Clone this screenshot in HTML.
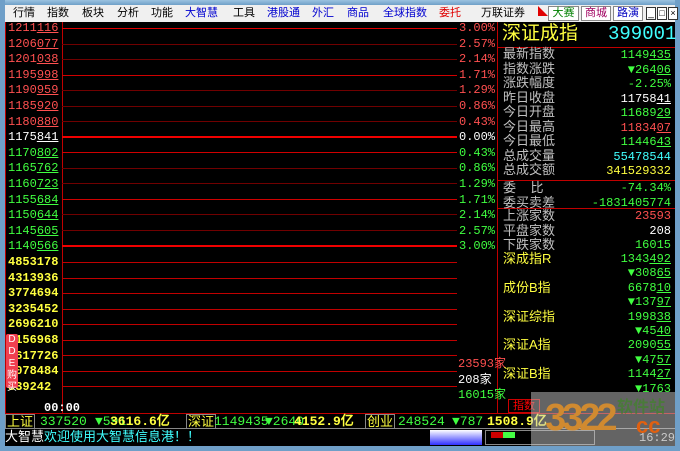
<!DOCTYPE html>
<html><head><meta charset="utf-8"><style>
*{margin:0;padding:0;box-sizing:border-box}
body{width:680px;height:451px;overflow:hidden;background:#6f9fc8;font-family:"Liberation Mono","Noto Sans CJK SC",monospace;position:relative}
.a{position:absolute;white-space:nowrap}
.m{font-family:"Liberation Mono",monospace;font-size:12px;line-height:14px}
.c{font-family:"Liberation Sans","Noto Sans CJK SC",sans-serif}
.r{color:#ff5050}.g{color:#40ff40}.w{color:#fff}.y{color:#ffff40}.cy{color:#40ffff}
.hl{position:absolute;height:1px;background:#c00000}
.u{text-decoration:underline}
.bx{border:1px solid #888;height:15px;top:0}
</style></head><body>
<div class="a" style="left:0;top:0;width:680px;height:5px;background:linear-gradient(#9cc2e0,#6f9fc8)"></div>
<div class="a" style="left:0;top:0;width:5px;height:451px;background:#6f9fc8"></div>
<div class="a" style="left:675px;top:0;width:5px;height:451px;background:#6f9fc8"></div>
<div class="a c" style="left:5px;top:5px;width:670px;height:17px;background:#f0f0f0;font-size:11px;line-height:17px;color:#000">
<span class="a" style="left:8px">行情</span><span class="a" style="left:42px">指数</span><span class="a" style="left:77px">板块</span><span class="a" style="left:112px">分析</span><span class="a" style="left:146px">功能</span><span class="a" style="left:180px;color:#0000d0">大智慧</span><span class="a" style="left:228px">工具</span><span class="a" style="left:262px;color:#0000d0">港股通</span><span class="a" style="left:307px;color:#0000d0">外汇</span><span class="a" style="left:342px;color:#0000d0">商品</span><span class="a" style="left:378px;color:#0000d0">全球指数</span><span class="a" style="left:434px;color:#e00000">委托</span><span class="a" style="left:476px">万联证券</span>
<span class="a" style="left:533px;top:2px;color:#e00000;font-size:10px;line-height:12px">◣</span>
<span class="a" style="left:543px;top:1px;height:15px;width:31px;border:1px solid #888;background:#fff;color:#008000;line-height:13px;text-align:center">大赛</span>
<span class="a" style="left:576px;top:1px;height:15px;width:30px;border:1px solid #888;background:#fff;color:#a00060;line-height:13px;text-align:center">商城</span>
<span class="a" style="left:608px;top:1px;height:15px;width:30px;border:1px solid #888;background:#fff;color:#0000c0;line-height:13px;text-align:center">路演</span>
<span class="a" style="left:641px;top:2px;height:13px;width:10px;border:1px solid #333;background:#fff;font-size:10px;line-height:11px;text-align:center">_</span>
<span class="a" style="left:652px;top:2px;height:13px;width:10px;border:1px solid #333;background:#fff;font-size:9px;line-height:11px;text-align:center">□</span>
<span class="a" style="left:663px;top:2px;height:13px;width:10px;border:1px solid #333;background:#fff;font-size:9px;line-height:11px;text-align:center">×</span>
</div>
<div class="a" style="left:5px;top:22px;width:670px;height:424px;background:#000"></div>
<div class="a" style="left:5px;top:22px;width:1px;height:392px;background:#c00000"></div>
<div class="a" style="left:62px;top:22px;width:1px;height:392px;background:#c00000"></div>
<div class="a" style="left:497px;top:22px;width:1px;height:392px;background:#c00000"></div>
<div class="a" style="left:5px;top:413px;width:670px;height:1px;background:#c00000"></div>

<div class="hl" style="left:62px;top:28px;width:395px;background:#e00000"></div>
<div class="hl" style="left:62px;top:44px;width:395px;background:#700000"></div>
<div class="hl" style="left:62px;top:59px;width:395px;background:#700000"></div>
<div class="hl" style="left:62px;top:75px;width:395px;background:#d00000"></div>
<div class="hl" style="left:62px;top:90px;width:395px;background:#700000"></div>
<div class="hl" style="left:62px;top:106px;width:395px;background:#700000"></div>
<div class="hl" style="left:62px;top:121px;width:395px;background:#700000"></div>
<div class="hl" style="left:62px;top:136px;width:395px;height:2px;background:#f00000"></div>
<div class="hl" style="left:62px;top:152px;width:395px;background:#d00000"></div>
<div class="hl" style="left:62px;top:168px;width:395px;background:#700000"></div>
<div class="hl" style="left:62px;top:183px;width:395px;background:#700000"></div>
<div class="hl" style="left:62px;top:199px;width:395px;background:#d00000"></div>
<div class="hl" style="left:62px;top:214px;width:395px;background:#700000"></div>
<div class="hl" style="left:62px;top:230px;width:395px;background:#700000"></div>
<div class="hl" style="left:62px;top:245px;width:395px;height:2px;background:#f00000"></div>
<div class="hl" style="left:62px;top:262px;width:395px"></div>
<div class="hl" style="left:62px;top:278px;width:395px"></div>
<div class="hl" style="left:62px;top:293px;width:395px"></div>
<div class="hl" style="left:62px;top:309px;width:395px"></div>
<div class="hl" style="left:62px;top:324px;width:395px"></div>
<div class="hl" style="left:62px;top:340px;width:395px"></div>
<div class="hl" style="left:62px;top:355px;width:395px"></div>
<div class="hl" style="left:62px;top:371px;width:395px"></div>
<div class="hl" style="left:62px;top:386px;width:395px"></div>

<div class="a m r" style="left:8px;top:21px;line-height:15.6px">1211<span class="u">116</span><br>1206<span class="u">077</span><br>1201<span class="u">038</span><br>1195<span class="u">998</span><br>1190<span class="u">959</span><br>1185<span class="u">920</span><br>1180<span class="u">880</span><br><span class="w">1175<span class="u">841</span></span><br><span class="g">1170<span class="u">802</span><br>1165<span class="u">762</span><br>1160<span class="u">723</span><br>1155<span class="u">684</span><br>1150<span class="u">644</span><br>1145<span class="u">605</span><br>1140<span class="u">566</span></span></div>
<div class="a m y" style="left:8px;top:255px;line-height:15.6px;font-weight:bold">4853178<br>4313936<br>3774694<br>3235452<br>2696210<br>2156968<br>1617726<br>1078484<br>539242</div>
<div class="a c" style="left:6px;top:334px;width:12px;height:54px;background:#f04050;border-radius:2px;color:#fff;font-size:10px;line-height:12px;text-align:center">D<br>D<br>E<br>购<br>买</div>
<div class="a m w" style="left:44px;top:401px;font-weight:bold">00:00</div>

<div class="a m r" style="left:459px;top:21px;line-height:15.6px">3.00%<br>2.57%<br>2.14%<br>1.71%<br>1.29%<br>0.86%<br>0.43%<br><span class="w">0.00%</span><br><span class="g">0.43%<br>0.86%<br>1.29%<br>1.71%<br>2.14%<br>2.57%<br>3.00%</span></div>
<div class="a m r" style="left:458px;top:357px">23593家</div>
<div class="a m w" style="left:458px;top:373px">208家</div>
<div class="a m g" style="left:458px;top:388px">16015家</div>

<div class="a c y" style="left:502px;top:22px;font-size:19px;line-height:24px">深证成指</div>
<div class="a m cy" style="left:608px;top:23px;font-size:19px;line-height:22px">399001</div>
<div class="hl" style="left:497px;top:47px;width:178px"></div>
<div class="hl" style="left:497px;top:180px;width:178px"></div>
<div class="hl" style="left:497px;top:208px;width:178px"></div>
<div class="a c" style="left:503px;top:47px;font-size:13px;line-height:14.5px;color:#c0c0c0">最新指数<br>指数涨跌<br>涨跌幅度<br>昨日收盘<br>今日开盘<br>今日最高<br>今日最低<br>总成交量<br>总成交额</div>
<div class="a m" style="right:9px;top:48px;line-height:14.5px;text-align:right"><span class="g">1149<span class="u">435</span></span><br><span class="g">▼264<span class="u">06</span></span><br><span class="g">-2.25%</span><br><span class="w">11758<span class="u">41</span></span><br><span class="g">11689<span class="u">29</span></span><br><span class="r">11834<span class="u">07</span></span><br><span class="g">11446<span class="u">43</span></span><br><span class="cy">55478544</span><br><span class="y">341529332</span></div>
<div class="a c" style="left:503px;top:181px;font-size:13px;line-height:14.5px;color:#c0c0c0">委&nbsp;&nbsp;&nbsp;&nbsp;比<br>委买卖差</div>
<div class="a m g" style="right:9px;top:181px;line-height:14.5px;text-align:right">-74.34%<br>-1831405774</div>
<div class="a c" style="left:503px;top:209px;font-size:13px;line-height:14.5px;color:#c0c0c0">上涨家数<br>平盘家数<br>下跌家数</div>
<div class="a m" style="right:9px;top:209px;line-height:14.5px;text-align:right"><span class="r">23593</span><br><span class="w">208</span><br><span class="g">16015</span></div>
<div class="a c y" style="left:503px;top:252px;font-size:13px;line-height:14.4px">深成指R<br><br>成份B指<br><br>深证综指<br><br>深证A指<br><br>深证B指</div>
<div class="a m g" style="right:9px;top:252px;line-height:14.4px;text-align:right">1343<span class="u">492</span><br>▼308<span class="u">65</span><br>6678<span class="u">10</span><br>▼137<span class="u">97</span><br>1998<span class="u">38</span><br>▼45<span class="u">40</span><br>2090<span class="u">55</span><br>▼47<span class="u">57</span><br>1144<span class="u">27</span><br>▼1763</div>
<div class="a c" style="left:508px;top:399px;width:32px;height:14px;border:1px solid #c00;color:#f00;font-size:11px;line-height:12px;text-align:center">指数</div>

<div class="a m" style="left:5px;top:414px;width:670px;height:15px;line-height:15px;font-size:13px">
<span class="a bx" style="left:0;width:30px"></span><span class="a bx" style="left:181px;width:30px"></span><span class="a bx" style="left:360px;width:30px"></span>
<span class="a c y" style="left:2px;font-size:13px">上证</span>
<span class="a g" style="left:35px">337520</span><span class="a g" style="left:90px">▼591</span><span class="a y" style="left:105px;font-weight:bold">3616.6亿</span>
<span class="a c y" style="left:183px;font-size:13px">深证</span><span class="a g" style="left:209px">1149435</span><span class="a g" style="left:260px">▼2640</span><span class="a y" style="left:289px;font-weight:bold">4152.9亿</span>
<span class="a c y" style="left:362px;font-size:13px">创业</span><span class="a g" style="left:393px">248524</span><span class="a g" style="left:447px">▼787</span><span class="a y" style="left:482px;font-weight:bold">1508.9亿</span>
</div>
<div class="a" style="left:5px;top:428px;width:670px;height:1px;background:#888"></div>
<div class="a c" style="left:5px;top:429px;width:670px;height:17px;font-size:13px;line-height:16px"><span class="w">大智慧</span><span class="cy">欢迎使用大智慧信息港！！</span></div>
<div class="a" style="left:430px;top:430px;width:52px;height:15px;background:linear-gradient(#fff,#3030ff)"></div>
<div class="a" style="left:485px;top:430px;width:110px;height:15px;border:1px solid #888"></div>
<div class="a" style="left:491px;top:432px;width:12px;height:6px;background:#c00"></div>
<div class="a" style="left:503px;top:432px;width:12px;height:6px;background:#4f4"></div>
<div class="a m w" style="left:639px;top:431px;color:#ccc">16:29</div>
<div class="a" style="left:531px;top:392px;width:144px;height:54px;background:rgba(200,200,200,0.5)"></div>
<div class="a c" style="left:545px;top:396px;font-size:38px;font-weight:bold;line-height:44px;color:#d08a30;letter-spacing:-4px">3322</div>
<div class="a c" style="left:617px;top:393px;font-size:16px;color:#4a7a3a;font-weight:bold">软件站</div>
<div class="a c" style="left:636px;top:413px;font-size:22px;color:#e06010;font-weight:bold">cc</div>
<div class="a" style="left:0;top:446px;width:680px;height:5px;background:#6f9fc8"></div>
</body></html>
